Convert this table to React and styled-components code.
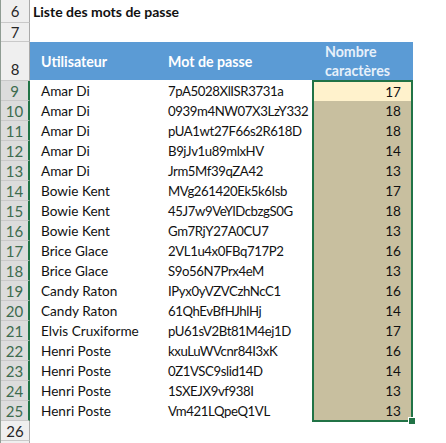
import React from "react";
import styled, { createGlobalStyle } from "styled-components";

const GlobalStyle = createGlobalStyle`
  html, body {
    margin: 0;
    padding: 0;
    background: #ffffff;
  }
  body {
    font-family: Lato, "Open Sans", "Liberation Sans", sans-serif;
    overflow: hidden;
  }
`;

const COLUMNS = "29px 127px 155px 101px 1fr";

const Sheet = styled.div`
  display: flex;
  flex-direction: column;
  width: 446px;
  height: 443px;
  border-left: 1px solid #8f9c93;
  box-sizing: border-box;
  overflow: hidden;
`;

const Row = styled.div`
  display: grid;
  grid-template-columns: ${COLUMNS};
  height: ${(p) => p.$height}px;
  flex-shrink: 0;
`;

const RowHead = styled.div`
  display: flex;
  justify-content: center;
  align-items: ${(p) => (p.$bottom ? "flex-end" : "center")};
  padding-bottom: ${(p) => (p.$bottom ? "2px" : "0")};
  box-sizing: border-box;
  font-size: 15px;
  color: ${(p) => (p.$selected ? "#3d6b4e" : "#262626")};
  background: ${(p) => (p.$selected ? "#dcdcdc" : "#efefef")};
  border-bottom: 1px solid #c9c9c9;
  border-right: ${(p) => (p.$selected ? "2px solid #217346" : "1px solid #a9a9a9")};
`;

const Title = styled.div`
  grid-column: 2 / 5;
  display: flex;
  align-items: center;
  padding-left: 3px;
  font-size: 14px;
  font-weight: 700;
  color: #111;
  white-space: nowrap;
`;

const HeadCell = styled.div`
  display: flex;
  align-items: center;
  background: #5b9bd5;
  color: ${(p) => (p.$soft ? "#e6f0fa" : "#ffffff")};
  font-weight: 700;
  font-size: 14.2px;
  line-height: 19px;
  padding-left: ${(p) => p.$indent}px;
  margin-bottom: 1px;
`;

const Cell = styled.div`
  display: flex;
  align-items: center;
  padding-left: 11px;
  font-size: ${(p) => (p.$tight ? "13.2px" : "13.6px")};
  letter-spacing: ${(p) => (p.$tight ? "-0.4px" : "0")};
  color: #111;
  white-space: nowrap;
`;

const CountCell = styled.div`
  position: relative;
  display: flex;
  align-items: center;
  justify-content: flex-end;
  padding-right: 10px;
  font-size: 13.6px;
  color: #111;
  background: ${(p) => (p.$active ? "#fff2cc" : "#c8bf9f")};
  border-left: 2px solid #217346;
  border-right: 2px solid #217346;
  border-top: ${(p) => (p.$first ? "2px solid #217346" : "none")};
  border-bottom: ${(p) => (p.$last ? "2px solid #217346" : "none")};
  margin-top: ${(p) => (p.$first ? "-1px" : "0")};
  margin-bottom: ${(p) => (p.$last ? "-1px" : "0")};
`;

const FillHandle = styled.span`
  position: absolute;
  right: -5px;
  bottom: -5px;
  width: 6px;
  height: 6px;
  background: #217346;
  border: 1px solid #ffffff;
`;

const entries = [
  ["Amar Di", "7pA5028XlISR3731a", 17],
  ["Amar Di", "0939m4NW07X3LzY332", 18],
  ["Amar Di", "pUA1wt27F66s2R618D", 18],
  ["Amar Di", "B9jJv1u89mlxHV", 14],
  ["Amar Di", "Jrm5Mf39qZA42", 13],
  ["Bowie Kent", "MVg261420Ek5k6Isb", 17],
  ["Bowie Kent", "45J7w9VeYlDcbzgS0G", 18],
  ["Bowie Kent", "Gm7RjY27A0CU7", 13],
  ["Brice Glace", "2VL1u4x0FBq717P2", 16],
  ["Brice Glace", "S9o56N7Prx4eM", 13],
  ["Candy Raton", "IPyx0yVZVCzhNcC1", 16],
  ["Candy Raton", "61QhEvBfHJhlHj", 14],
  ["Elvis Cruxiforme", "pU61sV2Bt81M4ej1D", 17],
  ["Henri Poste", "kxuLuWVcnr84I3xK", 16],
  ["Henri Poste", "0Z1VSC9slid14D", 14],
  ["Henri Poste", "1SXEJX9vf938I", 13],
  ["Henri Poste", "Vm421LQpeQ1VL", 13],
];

const App = () => {
  return (
    <>
      <GlobalStyle />
      <Sheet>
        <Row $height={23}>
          <RowHead>6</RowHead>
          <Title>Liste des mots de passe</Title>
        </Row>
        <Row $height={19}>
          <RowHead>7</RowHead>
        </Row>
        <Row $height={39}>
          <RowHead $bottom>8</RowHead>
          <HeadCell $indent={11}>Utilisateur</HeadCell>
          <HeadCell $indent={11}>Mot de passe</HeadCell>
          <HeadCell $indent={13} $soft>
            Nombre
            <br />
            caractères
          </HeadCell>
        </Row>

        {entries.map((entry, index) => {
          const [user, pwd, count] = entry;
          const last = index === entries.length - 1;
          return (
            <Row key={index} $height={20}>
              <RowHead $selected>{index + 9}</RowHead>
              <Cell>{user}</Cell>
              <Cell $tight>{pwd}</Cell>
              <CountCell $active={index === 0} $first={index === 0} $last={last}>
                {count}
                {last && <FillHandle />}
              </CountCell>
            </Row>
          );
        })}

        <Row $height={20}>
          <RowHead>26</RowHead>
        </Row>
        <Row $height={20}>
          <RowHead />
        </Row>
      </Sheet>
    </>
  );
};

export default App;
